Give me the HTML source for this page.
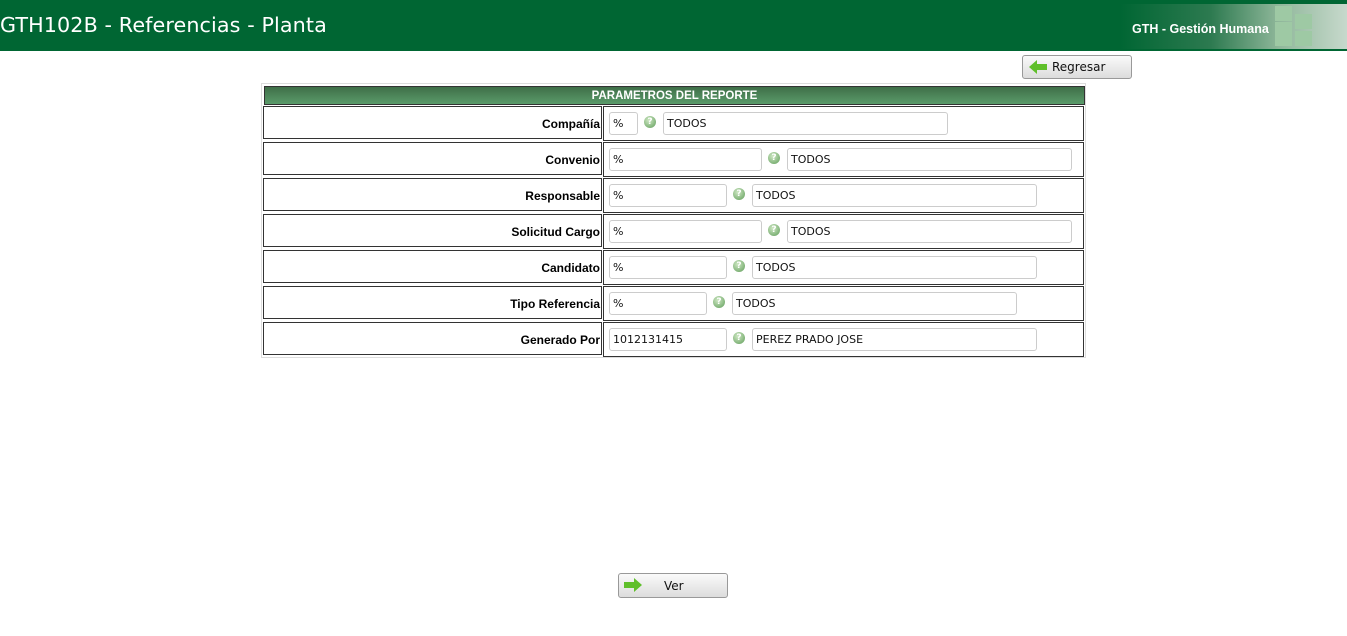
<!DOCTYPE html>
<html><head><meta charset="utf-8"><style>
body{margin:0;width:1347px;height:636px;background:#fff;font-family:"DejaVu Sans","Liberation Sans",sans-serif;position:relative;overflow:hidden}
.hdr{position:absolute;left:0;top:0;width:1347px;height:51px;background:#006633}
.hdr h1{position:absolute;left:0;top:13px;margin:0;font-weight:normal;font-size:20.7px;color:#fff;letter-spacing:0.1px}
.logo{position:absolute;left:1120px;top:4px;width:227px;height:45px;background:linear-gradient(90deg,#006633 0%,#2d7a50 40%,#8fb79a 70%,#c7d9cc 100%)}
.logo span{position:absolute;left:12px;top:18px;color:#fff;font-weight:bold;font-size:12.5px;font-family:"Liberation Sans",sans-serif}
.sq{position:absolute;width:17px;height:15px;background:#9ec9a4}
.btn{position:absolute;border:1px solid #999;border-radius:3px;background:linear-gradient(#fafafa,#dcdcdc);font-size:12px;color:#111}
.tbl{position:absolute;left:261px;top:83px;width:823px;height:273px;border:1px solid #ddd}
.th{position:absolute;left:2px;top:2px;width:819px;height:17px;background:linear-gradient(#3f6f48,#5a9b6a);border:1px solid #333;color:#fff;font-weight:bold;font-size:11.5px;text-align:center;line-height:18px;font-family:"Liberation Sans",sans-serif}
.cell{position:absolute;border:1px solid #333;height:33px}
.lab{font-weight:bold;font-size:12px;text-align:right;line-height:34px;padding-right:1px;box-sizing:border-box;font-family:"Liberation Sans",sans-serif}
.in{position:absolute;height:23px;border:1px solid #ccc;border-radius:3px;box-sizing:border-box;font-size:11px;line-height:22px;padding-left:3px;color:#111;background:#fff}
.q{position:absolute;width:12px;height:12px;border-radius:50%;background:radial-gradient(circle at 40% 35%,#cfe8c4,#5e9c58);color:#fff;font-size:9px;font-weight:bold;text-align:center;line-height:12px}
</style></head><body>
<div class="hdr"><h1>GTH102B - Referencias - Planta</h1>
<div class="logo"><span>GTH - Gestión Humana</span>
<div class="sq" style="left:155px;top:2px"></div><div class="sq" style="left:155px;top:18px"></div><div class="sq" style="left:175px;top:10px"></div><div class="sq" style="left:155px;top:32px;height:10px"></div><div class="sq" style="left:175px;top:27px"></div></div></div>

<div class="btn" style="left:1022px;top:55px;width:108px;height:22px"><svg style="position:absolute;left:5px;top:3px" width="20" height="16"><path d="M1 8 L9 1 L9 5 L19 5 L19 11 L9 11 L9 15 Z" fill="#5fbf2a"/></svg><span style="position:absolute;left:29px;top:4px">Regresar</span></div>

<div class="tbl"><div class="th">PARAMETROS DEL REPORTE</div></div>

<div id="rows"></div>
<script>
var rows=[["Compañía","%",638,"TODOS",948],["Convenio","%",762,"TODOS",1072],["Responsable","%",727,"TODOS",1037],["Solicitud Cargo","%",762,"TODOS",1072],["Candidato","%",727,"TODOS",1037],["Tipo Referencia","%",707,"TODOS",1017],["Generado Por","1012131415",727,"PEREZ PRADO JOSE",1037]];
var h="";
rows.forEach(function(r,i){var y=106+i*36;
h+='<div class="cell lab" style="left:263px;top:'+y+'px;width:339px">'+r[0]+'</div>';
h+='<div class="cell" style="left:603px;top:'+y+'px;width:479px"></div>';
h+='<div class="in" style="left:609px;top:'+(y+6)+'px;width:'+(r[2]-609)+'px">'+r[1]+'</div>';
h+='<div class="q" style="left:'+(r[2]+6)+'px;top:'+(y+10)+'px">?</div>';
h+='<div class="in" style="left:'+(r[2]+25)+'px;top:'+(y+6)+'px;width:'+(r[4]-r[2]-25)+'px">'+r[3]+'</div>';});
document.getElementById("rows").innerHTML=h;
</script>

<div class="btn" style="left:618px;top:573px;width:108px;height:23px"><svg style="position:absolute;left:4px;top:3px" width="20" height="16"><path d="M19 8 L11 1 L11 5 L1 5 L1 11 L11 11 L11 15 Z" fill="#5fbf2a"/></svg><span style="position:absolute;left:45px;top:5px">Ver</span></div>
</body></html>
